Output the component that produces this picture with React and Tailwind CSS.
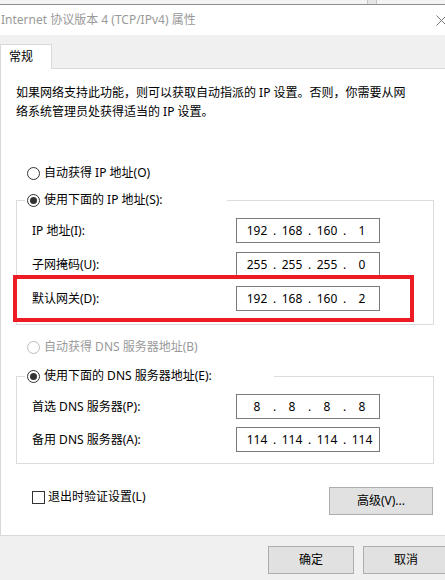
import React from 'react'

const font = { fontFamily: '"Noto Sans", "Noto Sans CJK SC", sans-serif' }

const Radio = ({ checked, disabled }) => (
    <span
        className={`flex h-[13px] w-[13px] shrink-0 items-center justify-center rounded-full border bg-white ${disabled ? "border-[#bcbcbc]" : "border-[#333333]"}`}
    >
        {checked && <span className="h-[7px] w-[7px] rounded-full bg-[#333333]" />}
    </span>
)

const IpBox = ({ parts }) => (
    <div className="flex h-[25px] w-[144px] shrink-0 items-center border border-[#7a7a7a] bg-white pl-[6px] text-black">
        {parts.map((p, i) => (
            <React.Fragment key={i}>
                {i > 0 && <span className="w-[7px] text-center">.</span>}
                <span className="w-[28px] text-center">{p}</span>
            </React.Fragment>
        ))}
    </div>
)

const FieldRow = ({ label, parts }) => (
    <div className="flex h-[25px] items-center pl-[15px] pr-[53px]">
        <span className="flex-1">{label}</span>
        <IpBox parts={parts} />
    </div>
)

const Btn = ({ children, className }) => (
    <button
        type="button"
        className={`flex shrink-0 items-center justify-center border border-[#adadad] bg-[#e1e1e1] text-black ${className}`}
    >
        {children}
    </button>
)

export default function App() {
    return (
        <div className="relative h-[580px] w-[445px] overflow-hidden bg-[#f0f0f0] text-[12px] text-black" style={font}>
            {/* window behind */}
            <div className="flex h-[5px] border-b border-[#8c8c8c] bg-[#f3f3f3]">
                <div className="ml-[367px] w-[10px] border-x border-[#c8c8c8] bg-[#e6e6e6]" />
            </div>

            {/* title bar */}
            <div className="flex h-[30px] items-center bg-white pl-[1px]">
                <span className="text-[#999999]">Internet 协议版本 4 (TCP/IPv4) 属性</span>
                <svg className="-mr-[2px] ml-auto" width="11" height="11" viewBox="0 0 11 11">
                    <path d="M0.5 0.5 L10.5 10.5 M10.5 0.5 L0.5 10.5" stroke="#777" strokeWidth="1" />
                </svg>
            </div>

            {/* tabs */}
            <div className="flex h-[33px] items-end">
                <div className="-mb-px flex h-[25px] w-[52px] items-center border border-b-0 border-[#d9d9d9] bg-white pl-[8px]">
                    常规
                </div>
            </div>

            {/* panel */}
            <div className="h-[468px] border-y border-l border-[#d9d9d9] bg-white">
                <p className="whitespace-nowrap pl-[15px] pt-[14px] leading-[19px]">
                    如果网络支持此功能，则可以获取自动指派的 IP 设置。否则，你需要从网
                    <br />
                    络系统管理员处获得适当的 IP 设置。
                </p>

                <div className="mt-[42px] flex h-[20px] items-center gap-[4px] pl-[26px]">
                    <Radio />
                    <span>自动获得 IP 地址(O)</span>
                </div>

                <fieldset className="ml-[15px] mt-[7px] w-[418px] border border-[#dcdcdc] pb-[13px]">
                    <legend className="ml-[8px] flex h-[20px] w-[202px] items-center gap-[4px] pl-[2px]">
                        <Radio checked />
                        <span>使用下面的 IP 地址(S):</span>
                    </legend>
                    <div className="flex flex-col gap-[9px] pt-[8px]">
                        <FieldRow label="IP 地址(I):" parts={["192", "168", "160", "1"]} />
                        <FieldRow label="子网掩码(U):" parts={["255", "255", "255", "0"]} />
                        <FieldRow label="默认网关(D):" parts={["192", "168", "160", "2"]} />
                    </div>
                </fieldset>

                <div className="mt-[12px] flex h-[20px] items-center gap-[4px] pl-[26px] text-[#9a9a9a]">
                    <Radio disabled />
                    <span>自动获得 DNS 服务器地址(B)</span>
                </div>

                <fieldset className="ml-[15px] mt-[9px] w-[418px] border border-[#dcdcdc] pb-[11px]">
                    <legend className="ml-[8px] flex h-[20px] w-[249px] items-center gap-[4px] pl-[2px]">
                        <Radio checked />
                        <span>使用下面的 DNS 服务器地址(E):</span>
                    </legend>
                    <div className="flex flex-col gap-[8px] pt-[8px]">
                        <FieldRow label="首选 DNS 服务器(P):" parts={["8", "8", "8", "8"]} />
                        <FieldRow label="备用 DNS 服务器(A):" parts={["114", "114", "114", "114"]} />
                    </div>
                </fieldset>

                <div className="mt-[23px] flex items-start justify-between pl-[31px] pr-[12px]">
                    <label className="mt-[1px] flex items-center gap-[3px]">
                        <span className="h-[13px] w-[13px] border border-[#333333] bg-white" />
                        <span>退出时验证设置(L)</span>
                    </label>
                    <Btn className="h-[28px] w-[104px]">高级(V)...</Btn>
                </div>
            </div>

            {/* footer */}
            <div className="mt-[10px] flex gap-[9px] pl-[268px]">
                <Btn className="h-[28px] w-[86px]">确定</Btn>
                <Btn className="h-[28px] w-[86px]">取消</Btn>
            </div>

            {/* red annotation */}
            <div className="pointer-events-none absolute left-[13px] top-[275px] h-[47px] w-[401px] border-4 border-[#ed1c24]" />
        </div>
    )
}
